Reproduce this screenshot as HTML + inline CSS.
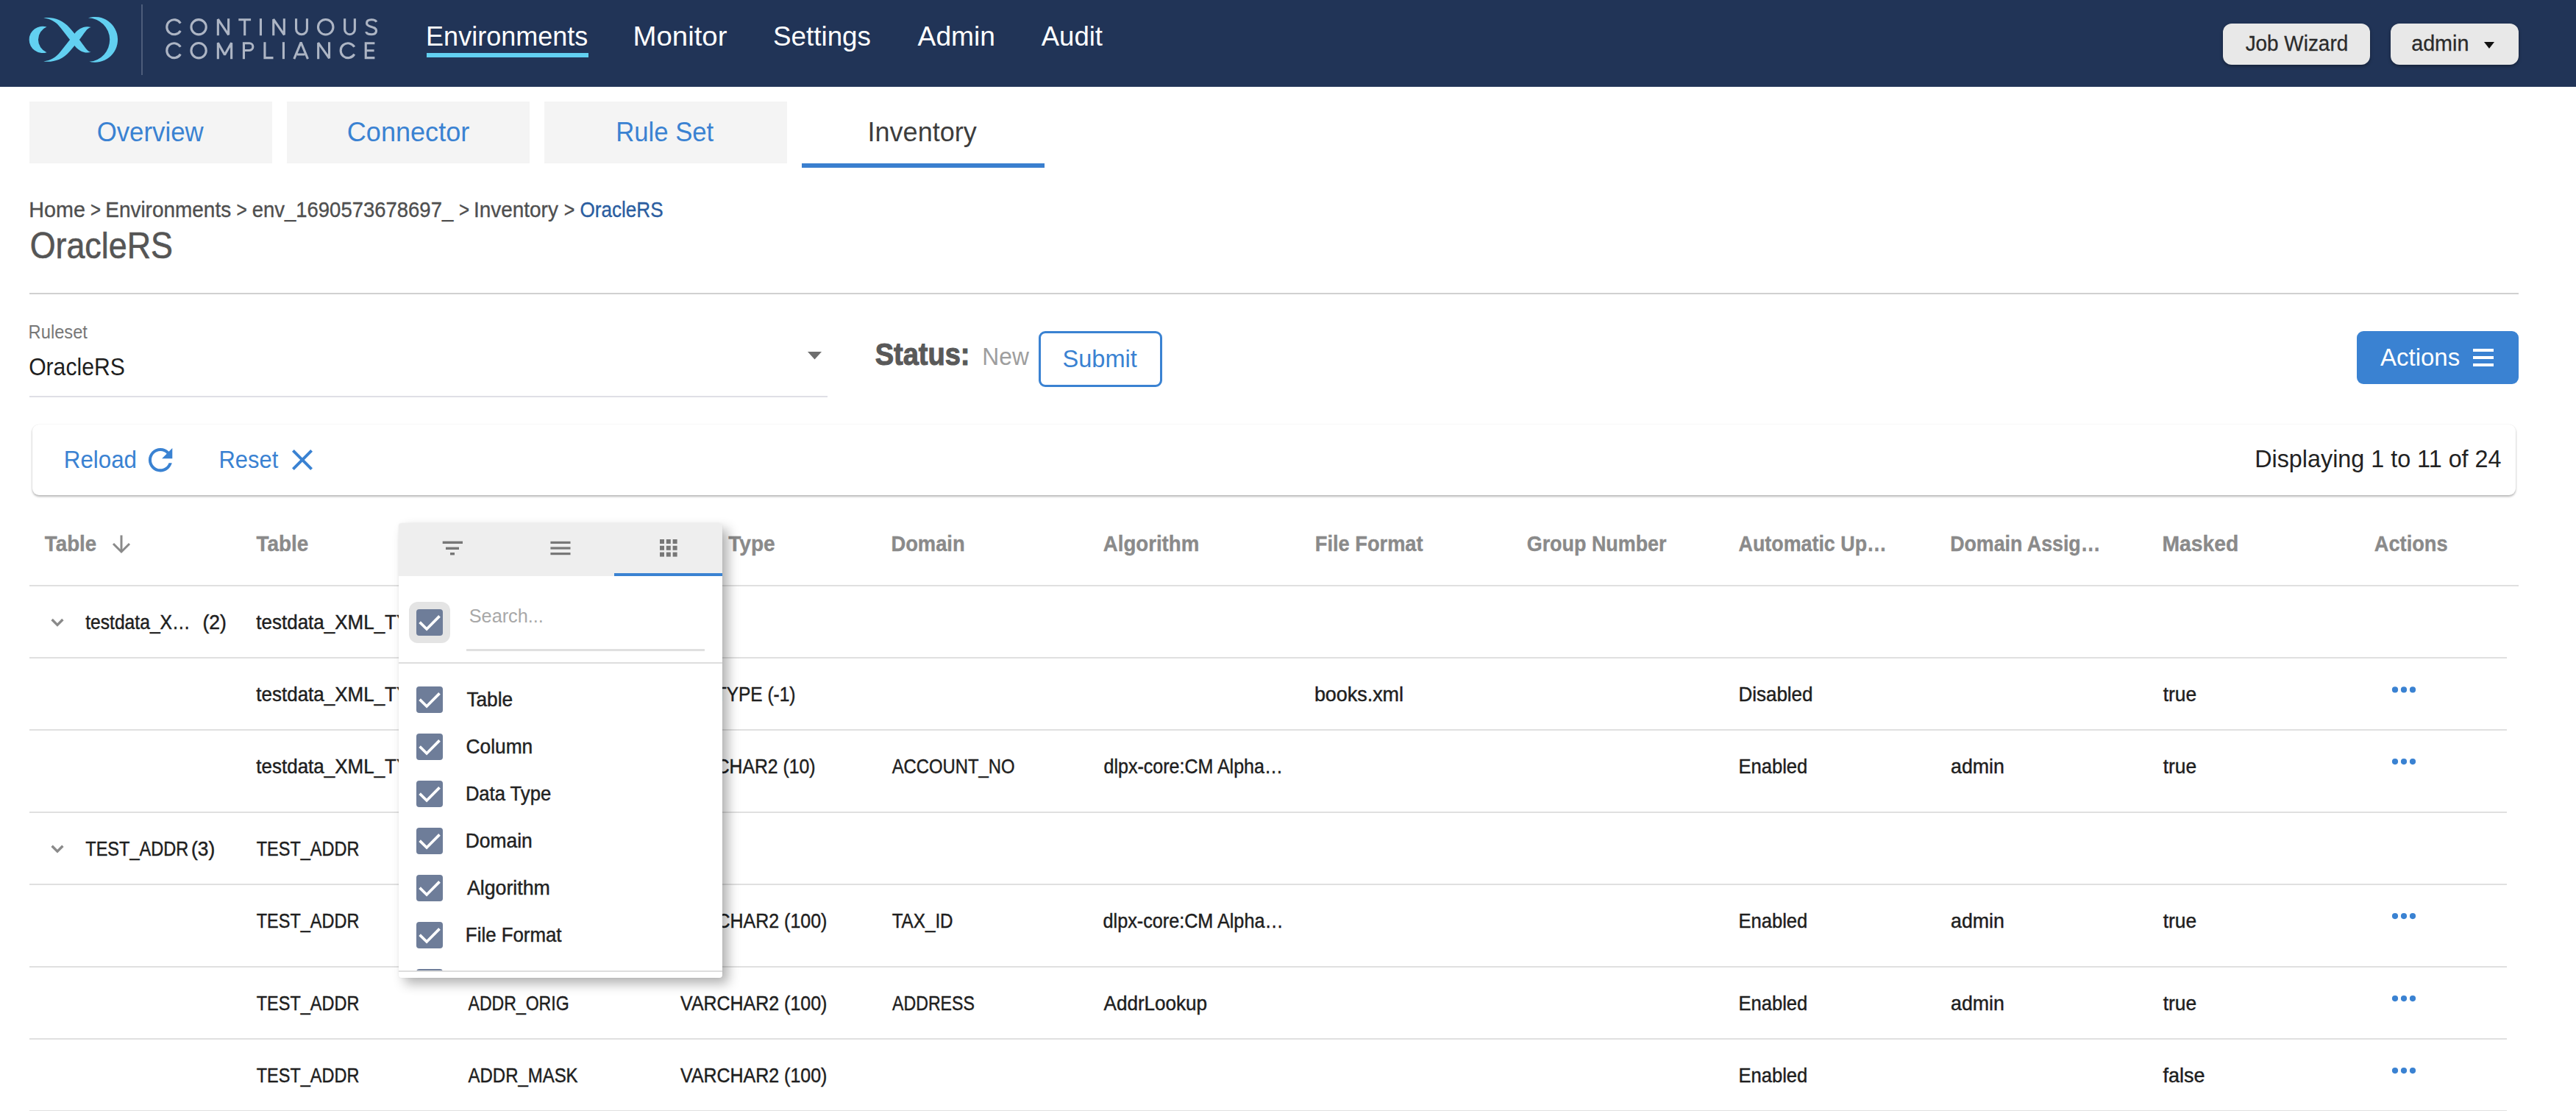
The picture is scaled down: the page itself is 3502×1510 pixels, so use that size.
<!DOCTYPE html>
<html><head><meta charset="utf-8"><title>Continuous Compliance - Inventory</title>
<style>
html,body{margin:0;padding:0;background:#fff;width:3502px;height:1510px;overflow:hidden;font-family:"Liberation Sans", sans-serif}
.main{position:absolute;left:0;top:0;width:3502px;height:1510px}
</style></head><body>
<div class="main">
<div style="position:absolute;left:0px;top:0px;width:3502px;height:118px;background:#213457"></div>
<div style="position:absolute;left:192px;top:6px;width:2px;height:96px;background:#4d5d7a"></div>
<div style="position:absolute;left:3022px;top:32px;width:200px;height:56px;background:#e8e8e8;border-radius:12px;box-shadow:0 2px 4px rgba(0,0,0,.35)"></div>
<div style="position:absolute;left:3250px;top:32px;width:174px;height:56px;background:#e8e8e8;border-radius:12px;box-shadow:0 2px 4px rgba(0,0,0,.35)"></div>
<svg style="position:absolute;left:30px;top:15px" width="180" height="80" viewBox="0 0 2500 1111"><g fill="#62d0f1">
<path d="M465 300 A252.5 252.5 0 1 0 465 780 A260 260 0 0 1 465 300 Z"/>
<path d="M405 130 C560 105 760 150 900 320 L992 428 L1082 540 C1180 660 1220 760 1300 775 C1170 810 1060 740 992 651 L903 540 L730 320 C640 200 540 150 405 130 Z"/>
<path d="M405 950 C560 975 760 930 900 760 L992 651 L1082 540 C1180 420 1220 320 1300 305 C1170 270 1060 340 992 428 L903 540 L730 760 C640 880 540 930 405 950 Z"/>
<path d="M1250 130 A429 429 0 1 1 1270 955 A413 413 0 0 0 1250 130 Z"/>
</g></svg>
<div style="position:absolute;left:580px;top:72px;width:220px;height:6px;background:#62d0f1"></div>
<div style="position:absolute;left:40px;top:138px;width:330px;height:84px;background:#f4f4f4"></div>
<div style="position:absolute;left:390px;top:138px;width:330px;height:84px;background:#f4f4f4"></div>
<div style="position:absolute;left:740px;top:138px;width:330px;height:84px;background:#f4f4f4"></div>
<div style="position:absolute;left:1090px;top:222px;width:330px;height:6px;background:#3a7fcf"></div>
<div style="position:absolute;left:40px;top:398px;width:3384px;height:2px;background:#d0d0d0"></div>
<div style="position:absolute;left:40px;top:538px;width:1085px;height:2px;background:#dfdfe6"></div>
<div style="position:absolute;left:1412px;top:450px;width:168px;height:76px;box-sizing:border-box;border:3px solid #3a82d2;border-radius:9px"></div>
<div style="position:absolute;left:3204px;top:450px;width:220px;height:72px;background:#3a82d2;border-radius:9px"></div>
<div style="position:absolute;left:3362px;top:474px;width:28px;height:4px;background:#fff"></div>
<div style="position:absolute;left:3362px;top:484px;width:28px;height:4px;background:#fff"></div>
<div style="position:absolute;left:3362px;top:494px;width:28px;height:4px;background:#fff"></div>
<div style="position:absolute;left:44px;top:577px;width:3376px;height:96px;background:#fff;border-radius:9px;box-shadow:0 2px 3px rgba(0,0,0,.28), 0 0 2px rgba(0,0,0,.08)"></div>
<div style="position:absolute;left:40px;top:795px;width:3384px;height:2px;background:#e0e0e0"></div>
<div style="position:absolute;left:40px;top:893px;width:3368px;height:2px;background:#e0e0e0"></div>
<div style="position:absolute;left:40px;top:991px;width:3368px;height:2px;background:#e0e0e0"></div>
<div style="position:absolute;left:40px;top:1103px;width:3368px;height:2px;background:#e0e0e0"></div>
<div style="position:absolute;left:40px;top:1201px;width:3368px;height:2px;background:#e0e0e0"></div>
<div style="position:absolute;left:40px;top:1313px;width:3368px;height:2px;background:#e0e0e0"></div>
<div style="position:absolute;left:40px;top:1411px;width:3368px;height:2px;background:#e0e0e0"></div>
<div style="position:absolute;left:40px;top:1509px;width:3368px;height:2px;background:#e0e0e0"></div>
<svg style="position:absolute;left:0;top:0;z-index:2" width="3502" height="1510" viewBox="0 0 3502 1510" font-family='"Liberation Sans", sans-serif'>
<g fill="none" stroke="#adb5c4" stroke-width="3.1" stroke-linejoin="miter" stroke-miterlimit="2"><path d="M245.35 31.65 A10.00 10.00 0 1 0 245.35 41.85"/><circle cx="270.10" cy="36.75" r="10.15"/><path d="M296.35 48.3 V26.20 L310.65 47.30 V25.2"/><path d="M324.3 26.75 H341.1 M332.70 26.75 V48.3"/><path d="M354.45 25.2 V48.3"/><path d="M371.75 48.3 V26.20 L386.35 47.30 V25.2"/><path d="M402.55 25.2 V39.30 A7.45 7.45 0 0 0 417.45 39.30 V25.2"/><circle cx="442.70" cy="36.75" r="10.25"/><path d="M468.65 25.2 V39.90 A6.85 6.85 0 0 0 482.35 39.90 V25.2"/><path d="M511.90 29.82 C510.60 27.25 508.05 26.75 505.05 26.75 C500.55 26.75 498.55 27.97 498.55 31.44 C498.55 37.91 511.55 34.90 511.55 41.83 C511.55 45.99 508.05 46.75 505.05 46.75 C501.05 46.75 498.00 45.99 497.80 43.22"/><path d="M245.35 63.78 A9.95 9.95 0 1 0 245.35 73.62"/><circle cx="270.10" cy="68.70" r="10.15"/><path d="M296.35 80.2 V58.20 L305.50 74.60 L314.65 58.20 V80.2"/><path d="M331.45 80.2 V58.75 H339.00 A4.85 4.85 0 0 1 339.00 68.45 H331.45"/><path d="M359.95 57.2 V78.65 H371.5"/><path d="M385.45 57.2 V80.2"/><path d="M399.80 80.2 L409.15 57.70 L418.50 80.2 M404.00 74.00 H414.30"/><path d="M432.65 80.2 V58.20 L447.55 79.20 V57.2"/><path d="M481.75 63.78 A9.95 9.95 0 1 0 481.75 73.62"/><path d="M509.4 58.75 H497.25 V78.65 H509.4 M497.25 68.70 H508.60"/></g>
<path d="M3377 57 L3391 57 L3384 66 Z" fill="#111"/>
<path d="M1098 478 L1117 478 L1107.5 488.5 Z" fill="#6e6e6e"/>
<g transform="translate(193.8,600.9) scale(2.025)" fill="#3a82d2"><path d="M17.65 6.35C16.2 4.9 14.21 4 12 4c-4.42 0-7.99 3.58-7.99 8s3.57 8 7.99 8c3.73 0 6.84-2.55 7.73-6h-2.08c-.82 2.33-3.04 4-5.65 4-3.31 0-6-2.69-6-6s2.69-6 6-6c1.66 0 3.14.69 4.22 1.78L13 11h7V4l-2.35 2.35z"/></g>
<g transform="translate(387,601) scale(2)" fill="#3a82d2"><path d="M19 6.41L17.59 5 12 10.59 6.41 5 5 6.41 10.59 12 5 17.59 6.41 19 12 13.41 17.59 19 19 17.59 13.41 12z"/></g>
<g stroke="#8a8a8a" stroke-width="3" fill="none"><path d="M165 727.5 V750"/><path d="M154 739 L165 750 L176 739"/></g>
<path d="M70.6 842 L78 849.4 L85.4 842" transform="translate(0,0)" stroke="#8a8a8a" stroke-width="3.4" fill="none"/>
<circle cx="3256" cy="937.4" r="4.1" fill="#3a82d2"/>
<circle cx="3268" cy="937.4" r="4.1" fill="#3a82d2"/>
<circle cx="3280" cy="937.4" r="4.1" fill="#3a82d2"/>
<circle cx="3256" cy="1035.1" r="4.1" fill="#3a82d2"/>
<circle cx="3268" cy="1035.1" r="4.1" fill="#3a82d2"/>
<circle cx="3280" cy="1035.1" r="4.1" fill="#3a82d2"/>
<path d="M70.6 842 L78 849.4 L85.4 842" transform="translate(0,307.79999999999995)" stroke="#8a8a8a" stroke-width="3.4" fill="none"/>
<circle cx="3256" cy="1245.1" r="4.1" fill="#3a82d2"/>
<circle cx="3268" cy="1245.1" r="4.1" fill="#3a82d2"/>
<circle cx="3280" cy="1245.1" r="4.1" fill="#3a82d2"/>
<circle cx="3256" cy="1357.1" r="4.1" fill="#3a82d2"/>
<circle cx="3268" cy="1357.1" r="4.1" fill="#3a82d2"/>
<circle cx="3280" cy="1357.1" r="4.1" fill="#3a82d2"/>
<circle cx="3256" cy="1455.1" r="4.1" fill="#3a82d2"/>
<circle cx="3268" cy="1455.1" r="4.1" fill="#3a82d2"/>
<circle cx="3280" cy="1455.1" r="4.1" fill="#3a82d2"/>
<text x="579.12" y="62" font-size="37.5" font-weight="400" fill="#ffffff" textLength="220.10" lengthAdjust="spacingAndGlyphs">Environments</text>
<text x="860.63" y="62" font-size="37.5" font-weight="400" fill="#ffffff" textLength="127.82" lengthAdjust="spacingAndGlyphs">Monitor</text>
<text x="1051.05" y="62" font-size="37.5" font-weight="400" fill="#ffffff" textLength="132.88" lengthAdjust="spacingAndGlyphs">Settings</text>
<text x="1247.60" y="62" font-size="37.5" font-weight="400" fill="#ffffff" textLength="105.40" lengthAdjust="spacingAndGlyphs">Admin</text>
<text x="1415.70" y="62" font-size="37.5" font-weight="400" fill="#ffffff" textLength="83.34" lengthAdjust="spacingAndGlyphs">Audit</text>
<text x="3052.63" y="68.7" font-size="28.8" font-weight="400" fill="#2b2b2b" textLength="139.58" lengthAdjust="spacingAndGlyphs" stroke="#2b2b2b" stroke-width="0.3">Job Wizard</text>
<text x="3278.20" y="68.7" font-size="28.8" font-weight="400" fill="#2b2b2b" textLength="78.18" lengthAdjust="spacingAndGlyphs" stroke="#2b2b2b" stroke-width="0.3">admin</text>
<text x="131.63" y="192" font-size="37.5" font-weight="400" fill="#3a82d2" textLength="144.98" lengthAdjust="spacingAndGlyphs">Overview</text>
<text x="471.80" y="192.4" font-size="37.5" font-weight="400" fill="#3a82d2" textLength="166.49" lengthAdjust="spacingAndGlyphs">Connector</text>
<text x="837.23" y="192" font-size="37.5" font-weight="400" fill="#3a82d2" textLength="132.97" lengthAdjust="spacingAndGlyphs">Rule Set</text>
<text x="1179.56" y="192" font-size="37.5" font-weight="400" fill="#3d3d3d" textLength="148.18" lengthAdjust="spacingAndGlyphs">Inventory</text>
<text x="39.28" y="295" font-size="29.5" font-weight="400" fill="#4f4f4f" textLength="76.61" lengthAdjust="spacingAndGlyphs" stroke="#4f4f4f" stroke-width="0.35">Home</text>
<text x="122.97" y="295" font-size="29.5" font-weight="400" fill="#4f4f4f" textLength="14.03" lengthAdjust="spacingAndGlyphs" stroke="#4f4f4f" stroke-width="0.35">&gt;</text>
<text x="143.24" y="295" font-size="29.5" font-weight="400" fill="#4f4f4f" textLength="170.94" lengthAdjust="spacingAndGlyphs" stroke="#4f4f4f" stroke-width="0.35">Environments</text>
<text x="321.54" y="295" font-size="29.5" font-weight="400" fill="#4f4f4f" textLength="14.39" lengthAdjust="spacingAndGlyphs" stroke="#4f4f4f" stroke-width="0.35">&gt;</text>
<text x="342.68" y="295" font-size="29.5" font-weight="400" fill="#4f4f4f" textLength="273.53" lengthAdjust="spacingAndGlyphs" stroke="#4f4f4f" stroke-width="0.35">env_1690573678697_</text>
<text x="624.06" y="295" font-size="29.5" font-weight="400" fill="#4f4f4f" textLength="14.15" lengthAdjust="spacingAndGlyphs" stroke="#4f4f4f" stroke-width="0.35">&gt;</text>
<text x="644.06" y="295" font-size="29.5" font-weight="400" fill="#4f4f4f" textLength="114.82" lengthAdjust="spacingAndGlyphs" stroke="#4f4f4f" stroke-width="0.35">Inventory</text>
<text x="766.82" y="295" font-size="29.5" font-weight="400" fill="#4f4f4f" textLength="14.63" lengthAdjust="spacingAndGlyphs" stroke="#4f4f4f" stroke-width="0.35">&gt;</text>
<text x="788.40" y="295" font-size="29.5" font-weight="400" fill="#2a5da0" textLength="113.19" lengthAdjust="spacingAndGlyphs" stroke="#2a5da0" stroke-width="0.35">OracleRS</text>
<text x="40.68" y="350.8" font-size="50" font-weight="400" fill="#555555" textLength="194.22" lengthAdjust="spacingAndGlyphs" stroke="#555" stroke-width="0.6">OracleRS</text>
<text x="38.60" y="459.6" font-size="25.5" font-weight="400" fill="#777777" textLength="80.33" lengthAdjust="spacingAndGlyphs">Ruleset</text>
<text x="39.14" y="509.5" font-size="34" font-weight="400" fill="#1f1f1f" textLength="130.70" lengthAdjust="spacingAndGlyphs">OracleRS</text>
<text x="1189.71" y="496" font-size="42.5" font-weight="700" fill="#595959" textLength="128.82" lengthAdjust="spacingAndGlyphs" stroke="#595959" stroke-width="1.1">Status:</text>
<text x="1335.36" y="496" font-size="33.5" font-weight="400" fill="#9e9e9e" textLength="63.50" lengthAdjust="spacingAndGlyphs">New</text>
<text x="1444.54" y="499" font-size="33.5" font-weight="400" fill="#3a82d2" textLength="101.31" lengthAdjust="spacingAndGlyphs">Submit</text>
<text x="3236.00" y="497.2" font-size="34" font-weight="400" fill="#ffffff" textLength="108.13" lengthAdjust="spacingAndGlyphs">Actions</text>
<text x="86.80" y="636" font-size="33.5" font-weight="400" fill="#3a82d2" textLength="99.21" lengthAdjust="spacingAndGlyphs">Reload</text>
<text x="297.53" y="636" font-size="33.5" font-weight="400" fill="#3a82d2" textLength="80.70" lengthAdjust="spacingAndGlyphs">Reset</text>
<text x="3065.21" y="635" font-size="34" font-weight="400" fill="#222222" textLength="335.32" lengthAdjust="spacingAndGlyphs">Displaying 1 to 11 of 24</text>
<text x="60.82" y="749.2" font-size="30" font-weight="700" fill="#8a8a8a" textLength="70.42" lengthAdjust="spacingAndGlyphs" stroke="#8a8a8a" stroke-width="0.4">Table</text>
<text x="348.52" y="749.2" font-size="30" font-weight="700" fill="#8a8a8a" textLength="70.83" lengthAdjust="spacingAndGlyphs" stroke="#8a8a8a" stroke-width="0.4">Table</text>
<text x="635.68" y="749.2" font-size="30" font-weight="700" fill="#8a8a8a" textLength="103.84" lengthAdjust="spacingAndGlyphs" stroke="#8a8a8a" stroke-width="0.4">Column</text>
<text x="923.14" y="749.2" font-size="30" font-weight="700" fill="#8a8a8a" textLength="55.47" lengthAdjust="spacingAndGlyphs" stroke="#8a8a8a" stroke-width="0.4">Data</text>
<text x="990.22" y="749.2" font-size="30" font-weight="700" fill="#8a8a8a" textLength="63.46" lengthAdjust="spacingAndGlyphs" stroke="#8a8a8a" stroke-width="0.4">Type</text>
<text x="1211.42" y="749.2" font-size="30" font-weight="700" fill="#8a8a8a" textLength="100.27" lengthAdjust="spacingAndGlyphs" stroke="#8a8a8a" stroke-width="0.4">Domain</text>
<text x="1499.81" y="749.2" font-size="30" font-weight="700" fill="#8a8a8a" textLength="130.46" lengthAdjust="spacingAndGlyphs" stroke="#8a8a8a" stroke-width="0.4">Algorithm</text>
<text x="1787.83" y="749.2" font-size="30" font-weight="700" fill="#8a8a8a" textLength="146.77" lengthAdjust="spacingAndGlyphs" stroke="#8a8a8a" stroke-width="0.4">File Format</text>
<text x="2075.72" y="749.2" font-size="30" font-weight="700" fill="#8a8a8a" textLength="189.80" lengthAdjust="spacingAndGlyphs" stroke="#8a8a8a" stroke-width="0.4">Group Number</text>
<text x="2363.53" y="749.2" font-size="30" font-weight="700" fill="#8a8a8a" textLength="201.36" lengthAdjust="spacingAndGlyphs" stroke="#8a8a8a" stroke-width="0.4">Automatic Up…</text>
<text x="2651.16" y="749.2" font-size="30" font-weight="700" fill="#8a8a8a" textLength="204.35" lengthAdjust="spacingAndGlyphs" stroke="#8a8a8a" stroke-width="0.4">Domain Assig…</text>
<text x="2939.56" y="749.2" font-size="30" font-weight="700" fill="#8a8a8a" textLength="103.74" lengthAdjust="spacingAndGlyphs" stroke="#8a8a8a" stroke-width="0.4">Masked</text>
<text x="3227.72" y="749.2" font-size="30" font-weight="700" fill="#8a8a8a" textLength="99.93" lengthAdjust="spacingAndGlyphs" stroke="#8a8a8a" stroke-width="0.4">Actions</text>
<text x="116.16" y="854.8" font-size="27.5" font-weight="400" fill="#1e1e1e" textLength="142.58" lengthAdjust="spacingAndGlyphs" stroke="#1e1e1e" stroke-width="0.45">testdata_X…</text>
<text x="275.54" y="854.8" font-size="27.5" font-weight="400" fill="#1e1e1e" textLength="32.39" lengthAdjust="spacingAndGlyphs" stroke="#1e1e1e" stroke-width="0.45">(2)</text>
<text x="348.34" y="854.8" font-size="27.5" font-weight="400" fill="#1e1e1e" textLength="207.95" lengthAdjust="spacingAndGlyphs" stroke="#1e1e1e" stroke-width="0.45">testdata_XML_TY</text>
<text x="348.34" y="953" font-size="27.5" font-weight="400" fill="#1e1e1e" textLength="207.95" lengthAdjust="spacingAndGlyphs" stroke="#1e1e1e" stroke-width="0.45">testdata_XML_TY</text>
<text x="924.21" y="953" font-size="27.5" font-weight="400" fill="#1e1e1e" textLength="157.28" lengthAdjust="spacingAndGlyphs" stroke="#1e1e1e" stroke-width="0.45">XMLTYPE (-1)</text>
<text x="1786.88" y="953" font-size="27.5" font-weight="400" fill="#1e1e1e" textLength="121.09" lengthAdjust="spacingAndGlyphs" stroke="#1e1e1e" stroke-width="0.45">books.xml</text>
<text x="2363.45" y="953" font-size="27.5" font-weight="400" fill="#1e1e1e" textLength="101.05" lengthAdjust="spacingAndGlyphs" stroke="#1e1e1e" stroke-width="0.45">Disabled</text>
<text x="2940.63" y="953" font-size="27.5" font-weight="400" fill="#1e1e1e" textLength="45.42" lengthAdjust="spacingAndGlyphs" stroke="#1e1e1e" stroke-width="0.45">true</text>
<text x="348.34" y="1051" font-size="27.5" font-weight="400" fill="#1e1e1e" textLength="207.95" lengthAdjust="spacingAndGlyphs" stroke="#1e1e1e" stroke-width="0.45">testdata_XML_TY</text>
<text x="924.70" y="1051" font-size="27.5" font-weight="400" fill="#1e1e1e" textLength="183.83" lengthAdjust="spacingAndGlyphs" stroke="#1e1e1e" stroke-width="0.45">VARCHAR2 (10)</text>
<text x="1212.72" y="1051" font-size="27.5" font-weight="400" fill="#1e1e1e" textLength="166.74" lengthAdjust="spacingAndGlyphs" stroke="#1e1e1e" stroke-width="0.45">ACCOUNT_NO</text>
<text x="1500.52" y="1051" font-size="27.5" font-weight="400" fill="#1e1e1e" textLength="243.47" lengthAdjust="spacingAndGlyphs" stroke="#1e1e1e" stroke-width="0.45">dlpx-core:CM Alpha…</text>
<text x="2363.48" y="1051" font-size="27.5" font-weight="400" fill="#1e1e1e" textLength="93.76" lengthAdjust="spacingAndGlyphs" stroke="#1e1e1e" stroke-width="0.45">Enabled</text>
<text x="2652.06" y="1051" font-size="27.5" font-weight="400" fill="#1e1e1e" textLength="72.82" lengthAdjust="spacingAndGlyphs" stroke="#1e1e1e" stroke-width="0.45">admin</text>
<text x="2940.63" y="1051" font-size="27.5" font-weight="400" fill="#1e1e1e" textLength="45.42" lengthAdjust="spacingAndGlyphs" stroke="#1e1e1e" stroke-width="0.45">true</text>
<text x="116.25" y="1162.9" font-size="27.5" font-weight="400" fill="#1e1e1e" textLength="139.99" lengthAdjust="spacingAndGlyphs" stroke="#1e1e1e" stroke-width="0.45">TEST_ADDR</text>
<text x="260.05" y="1162.9" font-size="27.5" font-weight="400" fill="#1e1e1e" textLength="32.17" lengthAdjust="spacingAndGlyphs" stroke="#1e1e1e" stroke-width="0.45">(3)</text>
<text x="348.76" y="1162.9" font-size="27.5" font-weight="400" fill="#1e1e1e" textLength="139.59" lengthAdjust="spacingAndGlyphs" stroke="#1e1e1e" stroke-width="0.45">TEST_ADDR</text>
<text x="348.76" y="1261" font-size="27.5" font-weight="400" fill="#1e1e1e" textLength="139.59" lengthAdjust="spacingAndGlyphs" stroke="#1e1e1e" stroke-width="0.45">TEST_ADDR</text>
<text x="636.14" y="1261" font-size="27.5" font-weight="400" fill="#1e1e1e" textLength="82.77" lengthAdjust="spacingAndGlyphs" stroke="#1e1e1e" stroke-width="0.45">TAX_ID</text>
<text x="925.10" y="1261" font-size="27.5" font-weight="400" fill="#1e1e1e" textLength="199.28" lengthAdjust="spacingAndGlyphs" stroke="#1e1e1e" stroke-width="0.45">VARCHAR2 (100)</text>
<text x="1212.64" y="1261" font-size="27.5" font-weight="400" fill="#1e1e1e" textLength="82.97" lengthAdjust="spacingAndGlyphs" stroke="#1e1e1e" stroke-width="0.45">TAX_ID</text>
<text x="1499.52" y="1261" font-size="27.5" font-weight="400" fill="#1e1e1e" textLength="245.10" lengthAdjust="spacingAndGlyphs" stroke="#1e1e1e" stroke-width="0.45">dlpx-core:CM Alpha…</text>
<text x="2363.48" y="1261" font-size="27.5" font-weight="400" fill="#1e1e1e" textLength="93.76" lengthAdjust="spacingAndGlyphs" stroke="#1e1e1e" stroke-width="0.45">Enabled</text>
<text x="2652.06" y="1261" font-size="27.5" font-weight="400" fill="#1e1e1e" textLength="72.82" lengthAdjust="spacingAndGlyphs" stroke="#1e1e1e" stroke-width="0.45">admin</text>
<text x="2940.63" y="1261" font-size="27.5" font-weight="400" fill="#1e1e1e" textLength="45.42" lengthAdjust="spacingAndGlyphs" stroke="#1e1e1e" stroke-width="0.45">true</text>
<text x="348.76" y="1373" font-size="27.5" font-weight="400" fill="#1e1e1e" textLength="139.59" lengthAdjust="spacingAndGlyphs" stroke="#1e1e1e" stroke-width="0.45">TEST_ADDR</text>
<text x="636.62" y="1373" font-size="27.5" font-weight="400" fill="#1e1e1e" textLength="136.97" lengthAdjust="spacingAndGlyphs" stroke="#1e1e1e" stroke-width="0.45">ADDR_ORIG</text>
<text x="925.10" y="1373" font-size="27.5" font-weight="400" fill="#1e1e1e" textLength="199.28" lengthAdjust="spacingAndGlyphs" stroke="#1e1e1e" stroke-width="0.45">VARCHAR2 (100)</text>
<text x="1213.12" y="1373" font-size="27.5" font-weight="400" fill="#1e1e1e" textLength="111.68" lengthAdjust="spacingAndGlyphs" stroke="#1e1e1e" stroke-width="0.45">ADDRESS</text>
<text x="1500.52" y="1373" font-size="27.5" font-weight="400" fill="#1e1e1e" textLength="140.58" lengthAdjust="spacingAndGlyphs" stroke="#1e1e1e" stroke-width="0.45">AddrLookup</text>
<text x="2363.48" y="1373" font-size="27.5" font-weight="400" fill="#1e1e1e" textLength="93.76" lengthAdjust="spacingAndGlyphs" stroke="#1e1e1e" stroke-width="0.45">Enabled</text>
<text x="2652.06" y="1373" font-size="27.5" font-weight="400" fill="#1e1e1e" textLength="72.82" lengthAdjust="spacingAndGlyphs" stroke="#1e1e1e" stroke-width="0.45">admin</text>
<text x="2940.63" y="1373" font-size="27.5" font-weight="400" fill="#1e1e1e" textLength="45.42" lengthAdjust="spacingAndGlyphs" stroke="#1e1e1e" stroke-width="0.45">true</text>
<text x="348.76" y="1470.6" font-size="27.5" font-weight="400" fill="#1e1e1e" textLength="139.59" lengthAdjust="spacingAndGlyphs" stroke="#1e1e1e" stroke-width="0.45">TEST_ADDR</text>
<text x="636.62" y="1470.6" font-size="27.5" font-weight="400" fill="#1e1e1e" textLength="148.98" lengthAdjust="spacingAndGlyphs" stroke="#1e1e1e" stroke-width="0.45">ADDR_MASK</text>
<text x="925.10" y="1470.6" font-size="27.5" font-weight="400" fill="#1e1e1e" textLength="199.28" lengthAdjust="spacingAndGlyphs" stroke="#1e1e1e" stroke-width="0.45">VARCHAR2 (100)</text>
<text x="2363.48" y="1470.6" font-size="27.5" font-weight="400" fill="#1e1e1e" textLength="93.76" lengthAdjust="spacingAndGlyphs" stroke="#1e1e1e" stroke-width="0.45">Enabled</text>
<text x="2940.62" y="1470.6" font-size="27.5" font-weight="400" fill="#1e1e1e" textLength="56.93" lengthAdjust="spacingAndGlyphs" stroke="#1e1e1e" stroke-width="0.45">false</text>
</svg>
<div style="position:absolute;left:542px;top:711px;width:440px;height:618px;background:#fff;border-radius:4px;box-shadow:8px 8px 16px rgba(0,0,0,.30), 0 0 3px rgba(0,0,0,.06);overflow:hidden;z-index:5">
<div style="position:absolute;left:0;top:0;width:440px;height:72px;background:#eeeeee"></div>
<div style="position:absolute;left:293px;top:68px;width:147px;height:4px;background:#3a82d2"></div>
<div style="position:absolute;left:0;top:189px;width:440px;height:2px;background:#dddddd"></div>
<div style="position:absolute;left:92px;top:171px;width:324px;height:3px;background:#e0e0e0"></div>
<div style="position:absolute;left:0;top:608px;width:440px;height:2px;background:#dddddd"></div>
<svg style="position:absolute;left:0;top:0;overflow:hidden" width="440" height="608" viewBox="542 711 440 608" font-family='"Liberation Sans", sans-serif'>
<g fill="#777"><rect x="601.7" y="735.6" width="27.3" height="3.4"/><rect x="606" y="743.6" width="18" height="3.4"/><rect x="612" y="751" width="6" height="3.4"/></g>
<g fill="#777"><rect x="748.4" y="735.8" width="27.1" height="3.2"/><rect x="748.4" y="743.4" width="27.1" height="3.2"/><rect x="748.4" y="751" width="27.1" height="3.2"/></g>
<g fill="#777"><rect x="897.0" y="733.0" width="6" height="6"/><rect x="897.0" y="741.8" width="6" height="6"/><rect x="897.0" y="750.6" width="6" height="6"/><rect x="905.8" y="733.0" width="6" height="6"/><rect x="905.8" y="741.8" width="6" height="6"/><rect x="905.8" y="750.6" width="6" height="6"/><rect x="914.6" y="733.0" width="6" height="6"/><rect x="914.6" y="741.8" width="6" height="6"/><rect x="914.6" y="750.6" width="6" height="6"/></g>
<rect x="556" y="818" width="56" height="56" rx="12" fill="#e4e4e4"/>
<rect x="566" y="828" width="36" height="36" rx="4" fill="#6e7d99"/>
<path d="M570.6 845.6 L580.1 855 L597.5 837.4" stroke="#fff" stroke-width="3.7" fill="none"/>
<rect x="566" y="933" width="36" height="36" rx="4" fill="#6e7d99"/>
<path d="M570.6 950.6 L580.1 960 L597.5 942.4" stroke="#fff" stroke-width="3.7" fill="none"/>
<rect x="566" y="997" width="36" height="36" rx="4" fill="#6e7d99"/>
<path d="M570.6 1014.6 L580.1 1024 L597.5 1006.4" stroke="#fff" stroke-width="3.7" fill="none"/>
<rect x="566" y="1061" width="36" height="36" rx="4" fill="#6e7d99"/>
<path d="M570.6 1078.6 L580.1 1088 L597.5 1070.4" stroke="#fff" stroke-width="3.7" fill="none"/>
<rect x="566" y="1125" width="36" height="36" rx="4" fill="#6e7d99"/>
<path d="M570.6 1142.6 L580.1 1152 L597.5 1134.4" stroke="#fff" stroke-width="3.7" fill="none"/>
<rect x="566" y="1189" width="36" height="36" rx="4" fill="#6e7d99"/>
<path d="M570.6 1206.6 L580.1 1216 L597.5 1198.4" stroke="#fff" stroke-width="3.7" fill="none"/>
<rect x="566" y="1253" width="36" height="36" rx="4" fill="#6e7d99"/>
<path d="M570.6 1270.6 L580.1 1280 L597.5 1262.4" stroke="#fff" stroke-width="3.7" fill="none"/>
<rect x="566" y="1317" width="36" height="36" rx="4" fill="#6e7d99"/>
<path d="M570.6 1334.6 L580.1 1344 L597.5 1326.4" stroke="#fff" stroke-width="3.7" fill="none"/>
<text x="637.76" y="846" font-size="26.5" font-weight="400" fill="#a8a8a8" textLength="101.06" lengthAdjust="spacingAndGlyphs">Search...</text>
<text x="634.40" y="959.6" font-size="27.5" font-weight="400" fill="#222222" textLength="62.78" lengthAdjust="spacingAndGlyphs" stroke="#222" stroke-width="0.45">Table</text>
<text x="633.61" y="1023.6" font-size="27.5" font-weight="400" fill="#222222" textLength="90.60" lengthAdjust="spacingAndGlyphs" stroke="#222" stroke-width="0.45">Column</text>
<text x="632.88" y="1087.6" font-size="27.5" font-weight="400" fill="#222222" textLength="116.25" lengthAdjust="spacingAndGlyphs" stroke="#222" stroke-width="0.45">Data Type</text>
<text x="632.81" y="1151.6" font-size="27.5" font-weight="400" fill="#222222" textLength="91.00" lengthAdjust="spacingAndGlyphs" stroke="#222" stroke-width="0.45">Domain</text>
<text x="634.93" y="1215.6" font-size="27.5" font-weight="400" fill="#222222" textLength="112.86" lengthAdjust="spacingAndGlyphs" stroke="#222" stroke-width="0.45">Algorithm</text>
<text x="632.86" y="1279.6" font-size="27.5" font-weight="400" fill="#222222" textLength="130.68" lengthAdjust="spacingAndGlyphs" stroke="#222" stroke-width="0.45">File Format</text>
<text x="633.78" y="1343.6" font-size="27.5" font-weight="400" fill="#222222" textLength="151.13" lengthAdjust="spacingAndGlyphs" stroke="#222" stroke-width="0.45">Group Number</text>
</svg></div>
</div>
</body></html>
